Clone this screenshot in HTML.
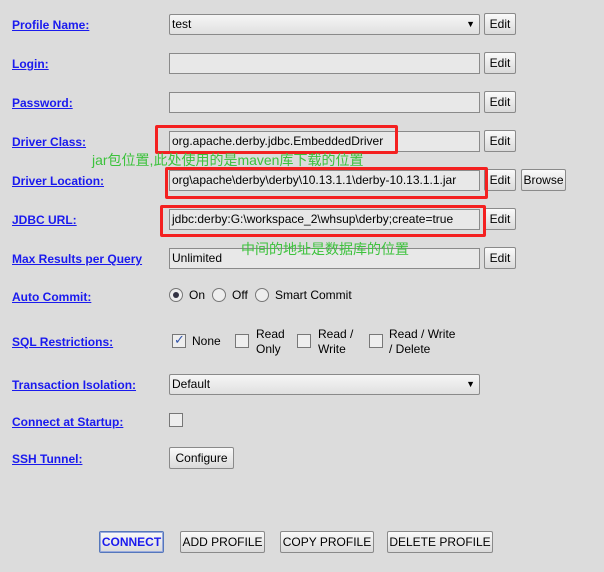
<!DOCTYPE html>
<html><head><meta charset="utf-8"><style>
body{margin:0;width:604px;height:572px;background:#dcdcdc;font-family:"Liberation Sans","DejaVu Sans",sans-serif;font-size:12px;color:#000;position:relative;overflow:hidden}
.a{position:absolute}
.lbl{position:absolute;left:12px;color:#1a1aee;font-weight:bold;text-decoration:underline;font-size:12px;line-height:14px;margin-top:2px}
.fld{position:absolute;left:169px;width:307px;height:19px;border:1px solid #8a8a8a;background:#e8e8e8;line-height:19px;padding-left:2px;box-sizing:content-box;white-space:nowrap;overflow:hidden}
.btn{position:absolute;height:20px;border:1px solid #8a8a8a;border-radius:2px;background:linear-gradient(#fafafa,#dadada);line-height:20px;text-align:center;font-size:12px}
.red{position:absolute;border:3px solid #f42020;border-radius:2px}
.g{position:absolute;color:#3cc23c;font-size:14px;font-family:"Liberation Sans","Noto Sans CJK SC",sans-serif;white-space:nowrap}
.cb{position:absolute;width:12px;height:12px;border:1px solid #777;background:#eee}
.rd{position:absolute;width:12px;height:12px;border:1px solid #777;border-radius:50%;background:#eee}
</style></head><body>
<div class="lbl" style="top:16px">Profile Name:</div>
<div class="lbl" style="top:55px">Login:</div>
<div class="lbl" style="top:94px">Password:</div>
<div class="lbl" style="top:133px">Driver Class:</div>
<div class="lbl" style="top:172px">Driver Location:</div>
<div class="lbl" style="top:211px">JDBC URL:</div>
<div class="lbl" style="top:250px">Max Results per Query</div>
<div class="lbl" style="top:288px">Auto Commit:</div>
<div class="lbl" style="top:333px">SQL Restrictions:</div>
<div class="lbl" style="top:376px">Transaction Isolation:</div>
<div class="lbl" style="top:413px">Connect at Startup:</div>
<div class="lbl" style="top:450px">SSH Tunnel:</div>

<div class="fld" style="top:14px;border-radius:2px;background:linear-gradient(#f6f6f6,#e0e0e0)">test<span class="a" style="right:4px;top:0;font-size:9px">▼</span></div>
<div class="btn" style="left:484px;top:13px;width:30px">Edit</div>
<div class="fld" style="top:53px"></div><div class="btn" style="left:484px;top:52px;width:30px">Edit</div>
<div class="fld" style="top:92px"></div><div class="btn" style="left:484px;top:91px;width:30px">Edit</div>
<div class="fld" style="top:131px">org.apache.derby.jdbc.EmbeddedDriver</div><div class="btn" style="left:484px;top:130px;width:30px">Edit</div>
<div class="fld" style="top:170px">org\apache\derby\derby\10.13.1.1\derby-10.13.1.1.jar</div><div class="btn" style="left:484px;top:169px;width:30px">Edit</div>
<div class="btn" style="left:521px;top:169px;width:43px">Browse</div>
<div class="fld" style="top:209px">jdbc:derby:G:\workspace_2\whsup\derby;create=true</div><div class="btn" style="left:484px;top:208px;width:30px">Edit</div>
<div class="fld" style="top:248px">Unlimited</div><div class="btn" style="left:484px;top:247px;width:30px">Edit</div>

<div class="red" style="left:155px;top:125px;width:237px;height:23px"></div>
<div class="red" style="left:165px;top:167px;width:317px;height:26px"></div>
<div class="red" style="left:160px;top:205px;width:320px;height:26px"></div>
<div class="g" style="left:92px;top:150px">jar包位置,此处使用的是maven库下载的位置</div>
<div class="g" style="left:241px;top:239px">中间的地址是数据库的位置</div>

<div class="rd" style="left:169px;top:288px"><div class="a" style="left:3px;top:3px;width:6px;height:6px;border-radius:50%;background:#334"></div></div>
<div class="a" style="left:189px;top:288px">On</div>
<div class="rd" style="left:212px;top:288px"></div><div class="a" style="left:232px;top:288px">Off</div>
<div class="rd" style="left:255px;top:288px"></div><div class="a" style="left:275px;top:288px">Smart Commit</div>

<div class="cb" style="left:172px;top:334px"><span class="a" style="left:1px;top:-3px;color:#3355aa;font-size:13px">✓</span></div>
<div class="a" style="left:192px;top:334px">None</div>
<div class="cb" style="left:235px;top:334px"></div><div class="a" style="left:256px;top:327px;line-height:15px">Read<br>Only</div>
<div class="cb" style="left:297px;top:334px"></div><div class="a" style="left:318px;top:327px;line-height:15px">Read /<br>Write</div>
<div class="cb" style="left:369px;top:334px"></div><div class="a" style="left:389px;top:327px;line-height:15px">Read / Write<br>/ Delete</div>

<div class="fld" style="top:374px;border-radius:2px;background:linear-gradient(#f6f6f6,#e0e0e0)">Default<span class="a" style="right:4px;top:0;font-size:9px">▼</span></div>
<div class="cb" style="left:169px;top:413px"></div>
<div class="btn" style="left:169px;top:447px;width:63px">Configure</div>

<div class="btn" style="left:99px;top:531px;width:63px;border-color:#5577bb;color:#1a1aee;font-weight:bold;box-shadow:inset 0 0 0 1px #99aadd">CONNECT</div>
<div class="btn" style="left:180px;top:531px;width:83px">ADD PROFILE</div>
<div class="btn" style="left:280px;top:531px;width:92px">COPY PROFILE</div>
<div class="btn" style="left:387px;top:531px;width:104px">DELETE PROFILE</div>
</body></html>
